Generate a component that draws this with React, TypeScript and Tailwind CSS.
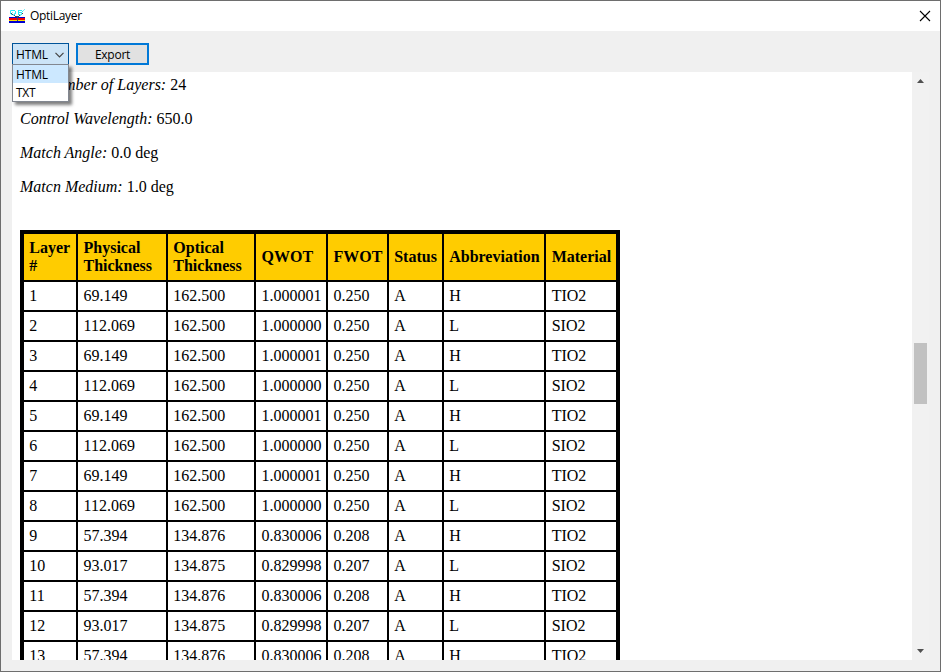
import React from "react";

const headers = [
  "Layer #",
  "Physical Thickness",
  "Optical Thickness",
  "QWOT",
  "FWOT",
  "Status",
  "Abbreviation",
  "Material",
];

const values = [
  ["69.149", "162.500", "1.000001", "0.250", "A", "H", "TIO2"],
  ["112.069", "162.500", "1.000000", "0.250", "A", "L", "SIO2"],
  ["69.149", "162.500", "1.000001", "0.250", "A", "H", "TIO2"],
  ["112.069", "162.500", "1.000000", "0.250", "A", "L", "SIO2"],
  ["69.149", "162.500", "1.000001", "0.250", "A", "H", "TIO2"],
  ["112.069", "162.500", "1.000000", "0.250", "A", "L", "SIO2"],
  ["69.149", "162.500", "1.000001", "0.250", "A", "H", "TIO2"],
  ["112.069", "162.500", "1.000000", "0.250", "A", "L", "SIO2"],
  ["57.394", "134.876", "0.830006", "0.208", "A", "H", "TIO2"],
  ["93.017", "134.875", "0.829998", "0.207", "A", "L", "SIO2"],
  ["57.394", "134.876", "0.830006", "0.208", "A", "H", "TIO2"],
  ["93.017", "134.875", "0.829998", "0.207", "A", "L", "SIO2"],
  ["57.394", "134.876", "0.830006", "0.208", "A", "H", "TIO2"],
];

const COLS = "grid grid-cols-[52px_88px_86px_70px_59px_53px_100px_70px] gap-x-[2px]";

const PAD = [
  "pl-[5.3px]",
  "pl-[5.5px]",
  "pl-[5.3px]",
  "pl-[5.5px]",
  "pl-[5.5px]",
  "pl-[5.2px]",
  "pl-[5.2px]",
  "pl-[5.7px]",
];

function AppIcon() {
  return (
    <svg width="17" height="14" viewBox="0 0 17 14" shapeRendering="crispEdges">
      <path d="M2 1h4v1H2zM1 2h1v3H1zM6 2h1v3H6zM2 5h4v1H2zM9 1h1v5H9zM10 1h3v1h-3zM10 3h3v1h-3zM10 5h3v1h-3zM13 2h1v1h-1z" fill="#28e8f8" />
      <path d="M1 1h1v1H1zM3 3h1v1H3zM5 4h1v1H5zM14 1h1v1h-1zM12 4h1v1h-1zM15 0h1v1h-1zM4 5h1v2H4zM11 5h1v2h-1z" fill="#7feaf5" />
      <rect y="8" width="16" height="1" fill="#0000d0" />
      <rect y="9" width="16" height="2" fill="#f00000" />
      <rect y="11" width="16" height="1" fill="#ffe000" />
      <rect y="12" width="16" height="2" fill="#0000d0" />
      <path d="M2 4h1v1H2zM3 5h1v1H3zM5 6h1v1H5zM6 7h2v1H6zM8 7h1v5H8zM10 6h1v1h-1zM9 7h1v1H9zM13 4h1v1h-1z" fill="#305060" />
    </svg>
  );
}

function Info({ name, value }: { name: string; value: string }) {
  return (
    <p className="mb-4 whitespace-nowrap">
      <i>{name}</i> {value}
    </p>
  );
}

function LayerTable() {
  return (
    <div className="w-[600px] border-4 border-black bg-black">
      <div className={COLS}>
        {headers.map((h, j) => (
          <div key={h} className={"flex h-[46px] items-center bg-[#ffcc00] font-bold " + PAD[j]}>
            {h}
          </div>
        ))}
      </div>
      {values.map((row, i) => (
        <div key={i} className={COLS + " mt-[2px]"}>
          {[String(i + 1), ...row].map((v, j) => (
            <div key={j} className={"h-7 bg-white pt-[5px] " + PAD[j]}>
              {v}
            </div>
          ))}
        </div>
      ))}
    </div>
  );
}

export default function App() {
  return (
    <div className="flex h-[672px] w-[941px] flex-col overflow-hidden border border-[#6e6e6e] bg-[#f0f0f0] font-['Open_Sans','Noto_Sans',sans-serif] text-[12px] leading-4 text-black">
      <header className="flex h-[30px] shrink-0 items-center bg-white pl-2">
        <AppIcon />
        <span className="ml-1 grow tracking-[-0.3px]">OptiLayer</span>
        <svg width="12" height="12" viewBox="0 0 12 12" className="mr-[9px]">
          <path d="M1 1l10 10M11 1L1 11" stroke="#000" strokeWidth="1.1" />
        </svg>
      </header>

      <div className="flex h-[41px] shrink-0 gap-[7px] pt-3 pl-[11px]">
        <div className="relative h-[23px] w-[57px]">
          <div className="flex h-[23px] w-[57px] items-center justify-between border border-[#005499] bg-[#cce4f7] pr-1 pl-[3px]">
            <span className="tracking-[-0.15px]">HTML</span>
            <svg width="9" height="6" viewBox="0 0 9 6">
              <path d="M.5.8l4 4 4-4" fill="none" stroke="#444" strokeWidth="1.2" />
            </svg>
          </div>
          <div className="absolute top-[21px] left-0 z-10 w-[57px] border border-[#828790] bg-white shadow-[3px_3px_3px_rgba(0,0,0,0.5)]">
            <div className="h-[18px] bg-[#cce8ff] pl-[3px] leading-[19px] tracking-[-0.15px]">HTML</div>
            <div className="h-[18px] pl-[3px] leading-[19px] tracking-[-0.3px]">TXT</div>
          </div>
        </div>
        <button className="h-[22px] w-[73px] border-2 border-[#0078d7] bg-[#e1e1e1] pt-px tracking-[-0.25px]">Export</button>
      </div>

      <main className="ml-[11px] flex h-[588px] w-[917px] shrink-0 overflow-hidden">
        <div className="h-[588px] w-[900px] overflow-hidden bg-white pt-1 pl-2 font-['Liberation_Serif',serif] text-[16px] leading-[18px]">
          <p className="mb-4 whitespace-nowrap">
            <i>
              <span className="inline-block w-[21.3px]">The</span> Number of Layers:
            </i>{" "}
            24
          </p>
          <Info name="Control Wavelength:" value="650.0" />
          <Info name="Match Angle:" value="0.0 deg" />
          <Info name="Matcn Medium:" value="1.0 deg" />
          <div className="mt-[34px]">
            <LayerTable />
          </div>
        </div>
        <div className="flex h-[588px] w-[17px] flex-col items-center bg-[#f1f1f1]">
          <svg width="7" height="4" viewBox="0 0 7 4" className="mt-[7px]">
            <path d="M0 4L3.5 0 7 4z" fill="#505050" />
          </svg>
          <div className="mt-[260px] h-[61px] w-[13px] bg-[#c1c1c1]" />
          <svg width="7" height="4" viewBox="0 0 7 4" className="mt-auto mb-[7px]">
            <path d="M0 0h7L3.5 4z" fill="#505050" />
          </svg>
        </div>
      </main>
    </div>
  );
}
